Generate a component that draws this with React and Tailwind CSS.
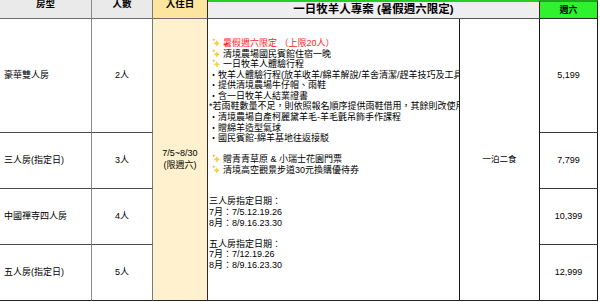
import React from 'react';

const FONT = '"Liberation Sans", "Noto Sans CJK TC", sans-serif';

function Sparkle() {
  return (
    <svg width="8" height="9" viewBox="0 0 10 11" className="inline-block ml-[3px] mr-[3px] align-[-1px]">
      <path d="M6 2.5 Q6.6 6 10 6.6 Q6.6 7.2 6 10.8 Q5.4 7.2 2 6.6 Q5.4 6 6 2.5Z" fill="#f6cf4a" />
      <path d="M2.2 0.2 Q2.5 1.8 4.2 2.2 Q2.5 2.6 2.2 4.2 Q1.9 2.6 0.2 2.2 Q1.9 1.8 2.2 0.2Z" fill="#f3b23a" />
    </svg>
  );
}

const ROOMS = [
  { name: '豪華雙人房', people: '2人', price: '5,199' },
  { name: '三人房(指定日)', people: '3人', price: '7,799' },
  { name: '中國禪寺四人房', people: '4人', price: '10,399' },
  { name: '五人房(指定日)', people: '5人', price: '12,999' },
];

// each entry is one line of the package cell; null = blank line
const LINES = [
  { star: true, red: true, text: '暑假週六限定 （上限20人）' },
  { star: true, text: '清境農場國民賓館住宿一晚' },
  { star: true, text: '一日牧羊人體驗行程' },
  { text: '・牧羊人體驗行程(放羊收羊/綿羊解說/羊舍清潔/趕羊技巧及工具使用)' },
  { text: '・提供清境農場牛仔帽、雨鞋' },
  { text: '・含一日牧羊人結業證書' },
  { text: '*若雨鞋數量不足，則依照報名順序提供雨鞋借用，其餘則改使用鞋套' },
  { text: '・清境農場自產柯麗黛羊毛-羊毛氈吊飾手作課程' },
  { text: '・贈綿羊造型氣球' },
  { text: '・國民賓館-綿羊基地往返接駁' },
  null,
  { star: true, text: '贈青青草原 & 小瑞士花園門票' },
  { star: true, text: '清境高空觀景步道30元換購優待券' },
  null,
  null,
  { text: '三人房指定日期：' },
  { text: '7月：7/5.12.19.26' },
  { text: '8月：8/9.16.23.30' },
  null,
  { text: '五人房指定日期：' },
  { text: '7月：7/12.19.26' },
  { text: '8月：8/9.16.23.30' },
  null,
];

export default function App() {
  return (
    <div className="w-[600px] h-[302px] bg-white overflow-hidden" style={{ fontFamily: FONT }}>
      <div className="grid grid-cols-[92px_61px_55px_252px_80px_58px] grid-rows-[19px_114px_56px_56px_56px] w-[598px] text-[9px] text-black">

        {/* ── Header ── */}
        <div className="bg-[#eaeaea] border-r border-b border-r-[#8a8a8a] border-b-[#6e6e6e] flex justify-center">
          <span className="font-bold text-[9.5px] leading-[10px] -mt-[1px]">房型</span>
        </div>
        <div className="bg-[#eaeaea] border-r border-b border-r-[#7a7a7a] border-b-[#6e6e6e] flex justify-center">
          <span className="font-bold text-[9.5px] leading-[10px] -mt-[1px]">人數</span>
        </div>
        <div className="bg-[#fde5a0] border-r border-b border-r-[#2a2a2a] border-b-[#6e6e6e] flex justify-center">
          <span className="font-bold text-[9.5px] leading-[10px] -mt-[1px]">入住日</span>
        </div>
        <div className="col-span-2 bg-[#eeeeee] border-t-2 border-t-[#22d022] border-r border-r-[#2a2a2a] border-b border-b-[#555] flex items-center justify-center">
          <span className="font-bold text-[11.5px] leading-none">一日牧羊人專案 (暑假週六限定)</span>
        </div>
        <div className="bg-[#2ff22f] border-t-2 border-t-[#1aa81a] border-r border-b border-[#2a2a2a] flex items-center justify-center">
          <span className="font-bold text-[9px] leading-none">週六</span>
        </div>

        {/* ── Room names + people (rows 2-5) ── */}
        {ROOMS.map((r, i) => (
          <React.Fragment key={r.name}>
            <div
              className={`col-start-1 border-r border-r-[#8a8a8a] border-b flex items-center px-[4px] ${i === 3 ? 'border-b-[#222]' : 'border-b-[#4a4a4a]'}`}
              style={{ gridRowStart: i + 2 }}
            >
              {r.name}
            </div>
            <div
              className={`col-start-2 border-r border-r-[#7a7a7a] border-b flex items-center justify-center ${i === 3 ? 'border-b-[#222]' : 'border-b-[#4a4a4a]'}`}
              style={{ gridRowStart: i + 2 }}
            >
              {r.people}
            </div>
          </React.Fragment>
        ))}

        {/* ── Check-in date ── */}
        <div className="col-start-3 row-start-2 row-span-4 bg-[#fff1cd] border-r border-r-[#2a2a2a] border-b border-b-[#222] flex flex-col items-center justify-center leading-[11.5px]">
          <span>7/5~8/30</span>
          <span>(限週六)</span>
        </div>

        {/* ── Package details ── */}
        <div className="col-start-4 row-start-2 row-span-4 border-r border-r-[#1a1a1a] border-b border-b-[#222] overflow-hidden whitespace-nowrap flex flex-col justify-center pl-[1px] leading-[10.55px]">
          {LINES.map((l, i) => (
            <div key={i} className="h-[10.55px]">
              {l && (
                <>
                  {l.star && <Sparkle />}
                  <span className={l.red ? 'text-[#ff2222]' : ''}>{l.text}</span>
                </>
              )}
            </div>
          ))}
        </div>

        {/* ── Meals ── */}
        <div className="col-start-5 row-start-2 row-span-4 border-r border-r-[#1a1a1a] border-b border-b-[#222] flex items-center justify-center text-[8.5px]">
          一泊二食
        </div>

        {/* ── Prices ── */}
        {ROOMS.map((r, i) => (
          <div
            key={r.price}
            className={`col-start-6 border-r border-r-[#1a1a1a] border-b flex items-center justify-center ${i === 3 ? 'border-b-[#222]' : 'border-b-[#3a3a3a]'}`}
            style={{ gridRowStart: i + 2 }}
          >
            {r.price}
          </div>
        ))}
      </div>
    </div>
  );
}
